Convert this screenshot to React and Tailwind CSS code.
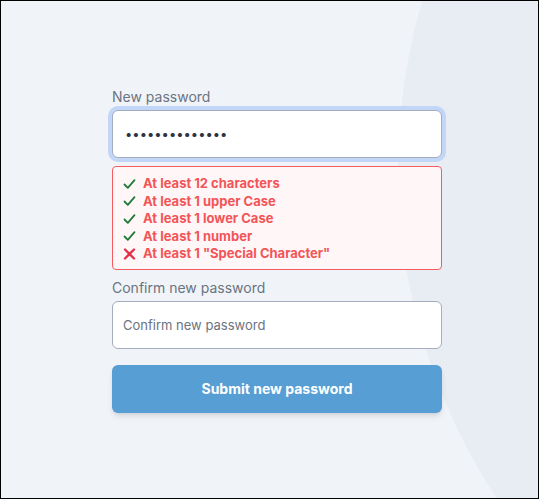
const RULES = [
  { ok: true, text: 'At least 12 characters' },
  { ok: true, text: 'At least 1 upper Case' },
  { ok: true, text: 'At least 1 lower Case' },
  { ok: true, text: 'At least 1 number' },
  { ok: false, text: 'At least 1 "Special Character"' },
]

function Check() {
  return (
    <svg width="13" height="12" viewBox="0 0 13 12" aria-hidden="true">
      <polyline points="1.5,6.5 4.8,9.8 11.5,2.2" fill="none" stroke="#1f7a3a" strokeWidth="1.8" strokeLinecap="round" strokeLinejoin="round" />
    </svg>
  )
}

function Cross() {
  return (
    <svg width="13" height="12" viewBox="0 0 13 12" aria-hidden="true">
      <path d="M2 1.5 L11 10.5 M11 1.5 L2 10.5" fill="none" stroke="#e0334a" strokeWidth="2.4" strokeLinecap="round" />
    </svg>
  )
}

export default function App() {
  return (
    <div
      className="relative h-[499px] overflow-hidden border border-black bg-[#f0f4f9]"
      style={{ fontFamily: 'Inter, "Noto Sans", sans-serif' }}
    >
      {/* decorative circle */}
      <div className="absolute left-[397px] top-[-432px] h-[1200px] w-[1200px] rounded-full bg-[#e8edf3]" />

      <div className="relative ml-[111px] w-[330px] pt-[86px]">
        <label className="block text-[14px] leading-5 text-[#6b7380]">New password</label>
        <input
          type="password"
          readOnly
          defaultValue="abcdefghijklmn"
          className="mt-[3px] block h-12 w-full rounded-md border border-[#a3adbd] bg-white px-3 text-[13px] text-[#2d3340] outline-none ring-4 ring-[#c2d7f7]"
        />

        <div className="mt-[8px] rounded-sm border border-[#f55a5f] bg-[#fff7f7] px-[10px] pb-[6px] pt-[8px]">
          {RULES.map(r => (
            <div key={r.text} className="flex h-[17.5px] items-center gap-[7px]">
              {r.ok ? <Check /> : <Cross />}
              <span className="text-[13px] font-bold text-[#f25558]">{r.text}</span>
            </div>
          ))}
        </div>

        <label className="mt-[8px] block text-[14px] leading-5 text-[#6b7380]">Confirm new password</label>
        <input
          type="password"
          placeholder="Confirm new password"
          className="mt-[3px] block h-12 w-full rounded-md border border-[#a3adbd] bg-white px-[10px] text-[13px] text-gray-700 outline-none placeholder:text-[#6b7380]"
        />

        <button
          type="button"
          className="mt-4 block h-12 w-full rounded-md bg-[#569ed4] text-[14px] font-bold text-white shadow-md"
        >
          Submit new password
        </button>
      </div>
    </div>
  )
}
